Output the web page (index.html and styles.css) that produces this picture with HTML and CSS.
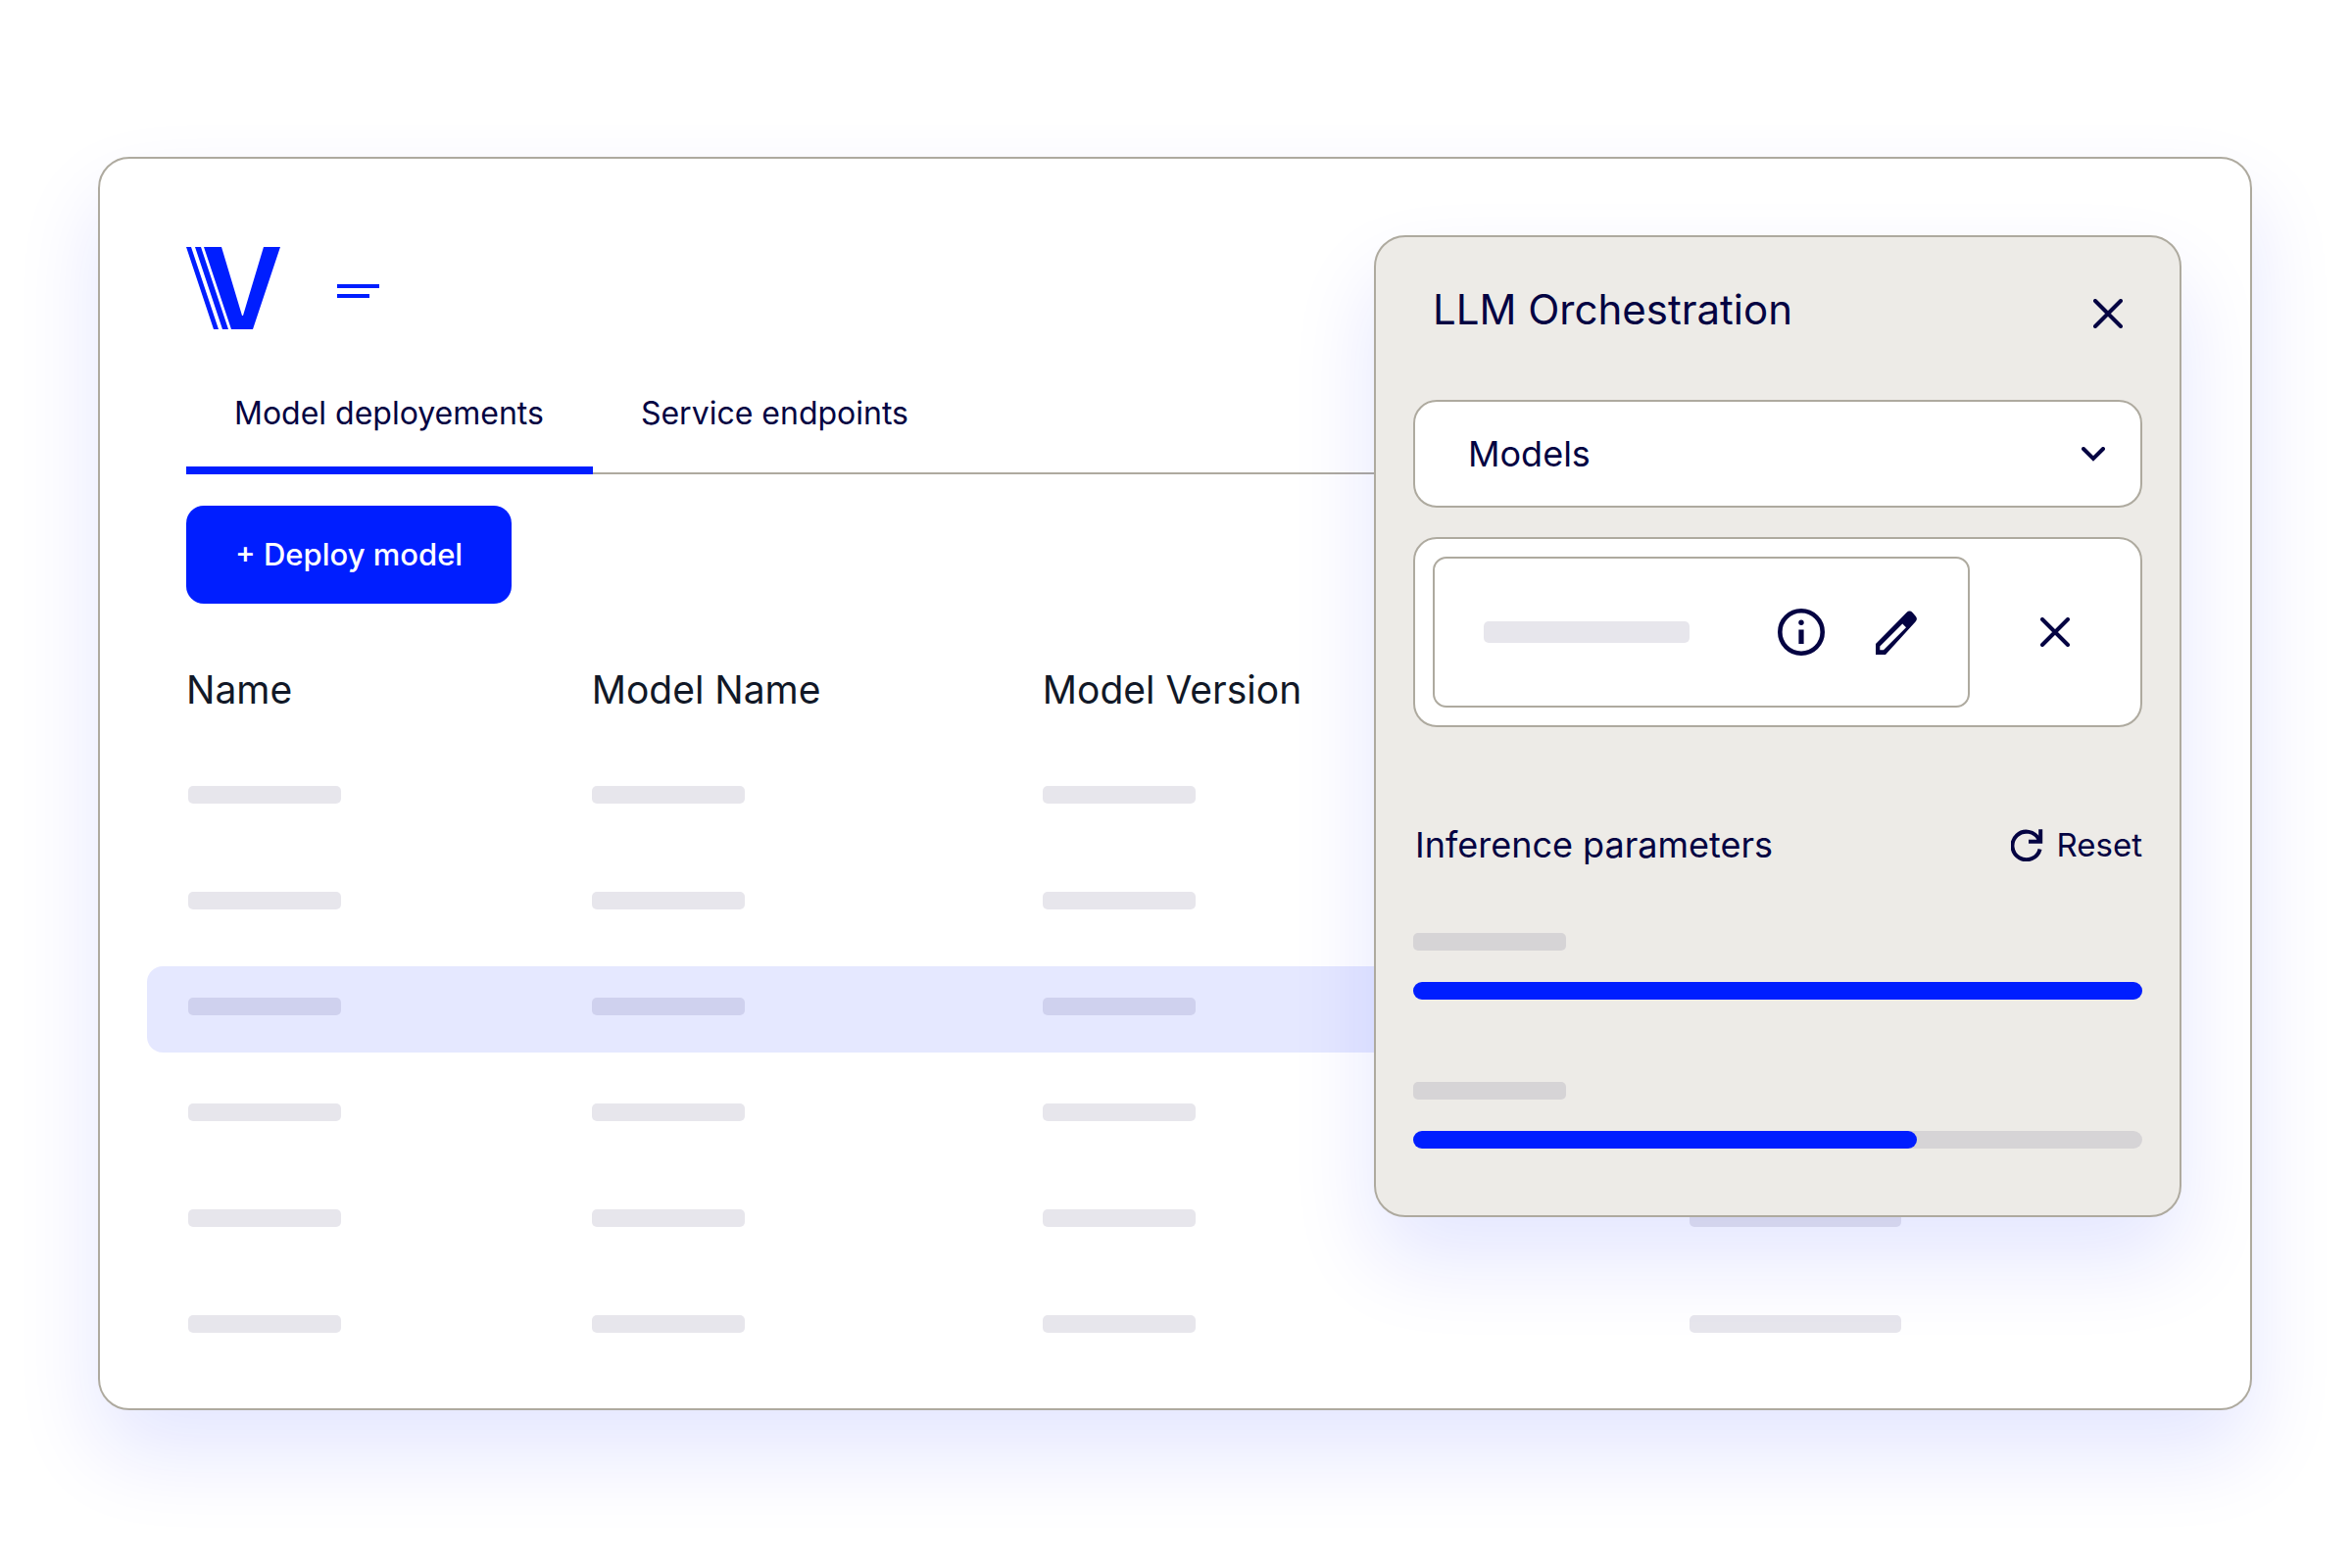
FILE: index.html
```html
<!DOCTYPE html>
<html lang="en">
<head>
<meta charset="utf-8">
<meta name="viewport" content="width=device-width, initial-scale=1">
<title>Model deployements</title>
<link rel="stylesheet" href="styles.css">
</head>
<body>
<main class="window">
  <header class="topbar">
    <svg class="logo" viewBox="0 0 96 84" role="img" aria-label="Logo">
      <path d="M0 0h5l28 84h-5z"/>
      <path d="M9 0h6l28 84h-6z"/>
      <path d="M18 0h18l21 70h1L79 0h17L68 84H46z"/>
    </svg>
    <button class="icon-button menu-button" type="button" aria-label="Menu">
      <svg class="menu-icon" viewBox="0 0 43 14"><path d="M0 0h43v4H0zM0 10h33v4H0z"/></svg>
    </button>
  </header>

  <nav class="tabs">
    <a class="tab tab-active" href="#deployments" aria-current="page">Model deployements</a>
    <a class="tab" href="#endpoints">Service endpoints</a>
  </nav>

  <button class="deploy" type="button">+ Deploy model</button>

  <table class="models">
    <colgroup><col class="col-name"><col class="col-model"><col class="col-version"><col></colgroup>
    <thead>
      <tr><th scope="col">Name</th><th scope="col">Model Name</th><th scope="col">Model Version</th><td></td></tr>
    </thead>
    <tbody>
      <tr><td><div class="bar"></div></td><td><div class="bar"></div></td><td><div class="bar"></div></td><td><div class="bar bar-wide"></div></td></tr>
      <tr><td><div class="bar"></div></td><td><div class="bar"></div></td><td><div class="bar"></div></td><td><div class="bar bar-wide"></div></td></tr>
      <tr class="selected"><td><div class="bar"></div></td><td><div class="bar"></div></td><td><div class="bar"></div></td><td><div class="bar bar-wide"></div></td></tr>
      <tr><td><div class="bar"></div></td><td><div class="bar"></div></td><td><div class="bar"></div></td><td><div class="bar bar-wide"></div></td></tr>
      <tr><td><div class="bar"></div></td><td><div class="bar"></div></td><td><div class="bar"></div></td><td><div class="bar bar-wide"></div></td></tr>
      <tr><td><div class="bar"></div></td><td><div class="bar"></div></td><td><div class="bar"></div></td><td><div class="bar bar-wide"></div></td></tr>
    </tbody>
  </table>

  <aside class="panel" aria-labelledby="panel-title">
    <div class="panel-head">
      <h2 class="panel-title" id="panel-title">LLM Orchestration</h2>
      <button class="icon-button panel-close" type="button" aria-label="Close panel">
        <svg class="close-icon" viewBox="0 0 30 30"><path d="M2 2l26 26M28 2L2 28"/></svg>
      </button>
    </div>

    <div class="picker">
      <select class="picker-select" aria-label="Models"><option>Models</option></select>
      <svg class="picker-arrow" viewBox="0 0 24 15"><path d="M2 2l10 10L22 2"/></svg>
    </div>

    <div class="choice">
      <div class="choice-model">
        <div class="bar bar-tall"></div>
        <div class="choice-actions">
          <button class="icon-button" type="button" aria-label="Model details">
            <svg class="info-icon" viewBox="0 0 48 48"><circle class="ring" cx="24" cy="24" r="21.7"/><circle cx="24" cy="14.3" r="2.7"/><path d="M21.4 21.5h5.2V36h-5.2z"/></svg>
          </button>
          <button class="icon-button" type="button" aria-label="Edit model">
            <svg class="edit-icon" viewBox="0 0 42 45"><path fill-rule="evenodd" d="M0 45V34L31.500 2Q34.500-.8 37.500 2L40.500 5.500Q43.300 8.500 40.500 11.500L10 45zM4.300 40.300H8L31 17.300L27.300 13.500L4.300 36.500z"/></svg>
          </button>
        </div>
      </div>
      <div class="choice-remove">
        <button class="icon-button" type="button" aria-label="Remove model">
          <svg class="close-icon" viewBox="0 0 30 30"><path d="M2 2l26 26M28 2L2 28"/></svg>
        </button>
      </div>
    </div>

    <section class="params">
      <div class="params-head">
        <h3 class="params-title">Inference parameters</h3>
        <button class="reset" type="button">
          <svg class="reset-icon" viewBox="0 0 33 33"><path d="M29.600 20.500A14.300 14.300 0 1 1 28.500 10.500L30 13"/><path d="M30.200 .3V12.700H18"/></svg>
          Reset
        </button>
      </div>
      <div class="param">
        <div class="bar"></div>
        <input class="slider" type="range" min="0" max="1000" value="1000" aria-label="First parameter" style="--fill: 1">
      </div>
      <div class="param">
        <div class="bar"></div>
        <input class="slider" type="range" min="0" max="1000" value="683" aria-label="Second parameter" style="--fill: 0.683">
      </div>
    </section>
  </aside>
</main>
</body>
</html>
```
FILE: styles.css
```css
:root {
  --blue: #001eff;
  --navy: #040342;
  --ink: #111827;
  --line: #aeaa9f;
  --sand: #edebe7;
  --bar: rgba(15, 9, 66, 0.1);
  --shadow: 0 44px 88px rgba(0, 30, 255, 0.11);
}

* {
  box-sizing: border-box;
}

body {
  margin: 0;
  padding: 160px 102px 160px 100px;
  background: #fff;
  color: var(--navy);
  font-family: Inter, "Liberation Sans", sans-serif;
  font-size: 32px;
  line-height: 40px;
}

button {
  border: 0;
  padding: 0;
  background: none;
  color: inherit;
  font: inherit;
  cursor: pointer;
}

svg {
  display: block;
}

.window {
  position: relative;
  padding: 90px 88px 32px;
  border: 2px solid var(--line);
  border-radius: 32px;
  background: #fff;
  box-shadow: var(--shadow);
}

.topbar {
  display: flex;
  align-items: center;
  gap: 58px;
}

.logo {
  width: 96px;
  height: 84px;
  fill: var(--blue);
}

.icon-button {
  display: block;
}

.menu-button {
  padding-top: 6px;
}

.menu-icon {
  width: 43px;
  height: 14px;
  fill: var(--blue);
}

.tabs {
  display: flex;
  margin-top: 66px;
  border-bottom: 2px solid var(--line);
}

.tab {
  margin-bottom: -2px;
  padding: 0 50px 34px 49px;
  border-bottom: 8px solid transparent;
  color: inherit;
  text-decoration: none;
}

.tab-active {
  border-color: var(--blue);
}

.deploy {
  display: block;
  height: 100px;
  margin-top: 32px;
  padding: 0 50px;
  border-radius: 18px;
  background: var(--blue);
  color: #fff;
  font-size: 31px;
  font-weight: 500;
}

.models {
  width: 100%;
  border-collapse: collapse;
  table-layout: fixed;
}

.col-name {
  width: 20.5%;
}

.col-model {
  width: 22.8%;
}

.col-version {
  width: 32.7%;
}

.models th {
  padding: 64px 0 29px;
  color: var(--ink);
  font-size: 39px;
  font-weight: 400;
  line-height: 48px;
  text-align: left;
}

.models td {
  padding: 0;
}

.models tbody tr {
  position: relative;
  height: 108px;
}

.models td:first-child {
  padding-left: 2px;
}

.selected td:first-child::before {
  content: "";
  position: absolute;
  inset: 13px 0 7px -40px;
  border-radius: 16px;
  background: rgba(0, 30, 255, 0.1);
}

.bar {
  width: 156px;
  height: 18px;
  border-radius: 5px;
  background: var(--bar);
}

.bar-wide {
  width: 216px;
}

.bar-tall {
  width: 210px;
  height: 22px;
}

.panel {
  position: absolute;
  top: 78px;
  right: 70px;
  width: 824px;
  padding: 48px 38px 68px;
  border: 2px solid var(--line);
  border-radius: 32px;
  background: var(--sand);
  box-shadow: var(--shadow);
}

.panel-head {
  display: flex;
  align-items: center;
  justify-content: space-between;
  margin-bottom: 66px;
  padding: 0 20px;
}

.panel-title {
  margin: 0;
  font-size: 42px;
  font-weight: 400;
  line-height: 52px;
}

.panel-close {
  padding-top: 8px;
}

.close-icon {
  width: 30px;
  height: 30px;
  fill: none;
  stroke: var(--navy);
  stroke-width: 4;
  stroke-linecap: round;
}

.picker {
  position: relative;
  margin-bottom: 30px;
}

.picker-select {
  display: block;
  width: 100%;
  height: 110px;
  padding: 0 54px;
  border: 2px solid var(--line);
  border-radius: 24px;
  appearance: none;
  background: #fff;
  color: inherit;
  font: inherit;
  font-size: 36px;
}

.picker-arrow {
  position: absolute;
  top: 48px;
  right: 38px;
  width: 24px;
  height: 15px;
  fill: none;
  stroke: var(--navy);
  stroke-width: 4;
  stroke-linecap: round;
  pointer-events: none;
}

.choice {
  display: flex;
  padding: 18px;
  border: 2px solid var(--line);
  border-radius: 24px;
  background: #fff;
}

.choice-model {
  display: flex;
  flex: 1;
  align-items: center;
  justify-content: space-between;
  height: 154px;
  padding: 0 52px 0 50px;
  border: 2px solid var(--line);
  border-radius: 14px;
}

.choice-actions {
  display: flex;
  align-items: center;
  gap: 52px;
}

.choice-remove {
  display: flex;
  align-items: center;
  justify-content: center;
  width: 156px;
  padding-left: 18px;
}

.info-icon {
  width: 48px;
  height: 48px;
  fill: var(--navy);
}

.ring {
  fill: none;
  stroke: var(--navy);
  stroke-width: 4.6;
}

.edit-icon {
  width: 42px;
  height: 45px;
  fill: var(--navy);
}

.params {
  margin-top: 96px;
}

.params-head {
  display: flex;
  align-items: center;
  justify-content: space-between;
  height: 48px;
  margin-bottom: 66px;
  padding-left: 2px;
}

.params-title {
  margin: 0;
  font-size: 36px;
  font-weight: 400;
  line-height: 48px;
}

.reset {
  display: flex;
  align-items: center;
  gap: 14px;
  font-size: 33px;
}

.reset-icon {
  width: 33px;
  height: 33px;
  fill: none;
  stroke: var(--navy);
  stroke-width: 4;
}

.param + .param {
  margin-top: 84px;
}

.slider {
  display: block;
  width: 100%;
  height: 18px;
  margin: 32px 0 0;
  border-radius: 9px;
  appearance: none;
  background: linear-gradient(var(--blue), var(--blue)) 0 0 / calc(9px + (100% - 18px) * var(--fill)) 100% no-repeat var(--bar);
}

.slider::-webkit-slider-thumb {
  width: 18px;
  height: 18px;
  border-radius: 9px;
  appearance: none;
  background: var(--blue);
}
```
